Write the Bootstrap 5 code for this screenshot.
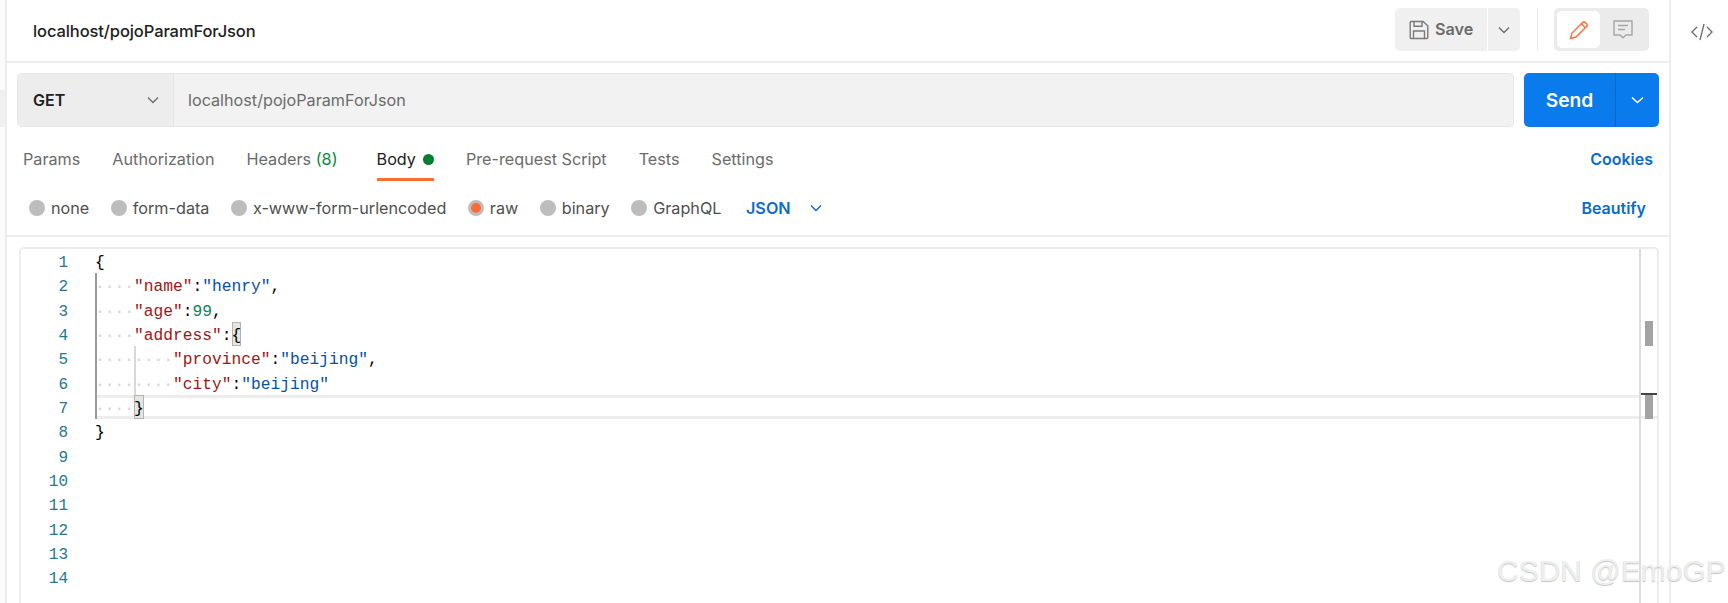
<!DOCTYPE html>
<html lang="en">
<head>
<meta charset="utf-8">
<title>localhost/pojoParamForJson</title>
<link href="https://cdn.jsdelivr.net/npm/bootstrap@5.3.0/dist/css/bootstrap.min.css" rel="stylesheet">
<style>
html,body{height:603px;overflow:hidden}
body{font-family:Inter,"Liberation Sans",sans-serif;background:#fff;color:#212121;font-size:16.2px}
.shell{height:603px;position:relative}
.left-strip{width:7px;flex:none;background:#fbfbfb;border-right:2px solid #ededed;padding-top:90px}
.left-strip i{display:block;height:37px;background:#f0f0f0;width:5px}
.main-pane{width:1662px;flex:none;min-width:0}
.main-pane>div{flex:none}
.side-pane{flex:1;border-left:2px solid #ededed;padding-top:18px;padding-left:20px}
.head-row{height:63px;border-bottom:2px solid #ededed;padding:8px 20px 0 26px}
.req-title{font-size:16.5px;font-weight:500;color:#212121;margin-top:11px;letter-spacing:-.1px}
.save-btn{height:43px;width:92px;background:#f0f0f0;border-radius:5px 0 0 5px;color:#6b6b6b;font-weight:600;font-size:16.2px;gap:6px;padding-left:14px}
.save-caret{height:43px;width:32px;margin-left:1px;background:#f0f0f0;border-radius:0 5px 5px 0}
.vsep{width:1px;height:43px;background:#ededed;margin:0 16px 0 17px}
.mode-box{height:43px;width:95px;background:#ebebeb;border-radius:5px;padding:3px}
.mode-on{width:43px;height:37px;background:#fff;border-radius:5px}
.mode-off{width:46px;height:37px}
.url-row{padding:10px 10px 0 10px;height:65px}
.url-box{flex:1;height:54px;background:#f2f2f2;border:1px solid #e6e6e6;border-radius:5px;overflow:hidden}
.method{width:156px;background:#ededed;border-right:1px solid #e6e6e6;padding:0 14px 0 15px;font-weight:600;font-size:16px;color:#212121}
.url-text{padding-left:14px;font-size:16.2px;color:#6b6b6b}
.send-btn{width:135px;height:54px;margin-left:10px;background:#097bed;border-radius:5px;color:#fff;font-weight:600;font-size:19.2px}
.send-main{width:92px;border-right:1px solid #0767c6;height:100%}
.send-caret{flex:1;height:100%}
.tab-row{height:53px;padding:0 16px 0 16px}
.tab-item{color:#6b6b6b;height:53px;padding-top:9px;margin-right:32px;position:relative}
.tab-item.wide-gap{margin-right:39px}
.tab-item.on{color:#212121}
.tab-item.on::after{content:"";position:absolute;left:0;right:0;bottom:0;height:3px;background:#ff6c37}
.green-num{color:#0a8a3e}
.green-dot{width:11px;height:11px;border-radius:50%;background:#007f31;margin-left:7px}
.link-blue{color:#0b6bcb;font-weight:600;font-size:16px}
.cookie-link{margin-top:9px}
.radio-row{height:56px;padding:0 23px 0 22px;border-bottom:2px solid #ededed}
.rad{width:16px;height:16px;border-radius:50%;background:#bdbdbd;margin-right:6px;flex:none}
.rad.sel{background:#ff6c37;border:3px solid #bdbdbd}
.rad-item{color:#505050;margin-right:21.5px}
.json-pick{color:#0b6bcb;font-weight:600;margin-left:3px;gap:19px}
.editor-wrap{padding:10px 10px 0 12px}
.editor{height:356px;border:2px solid #ededed;border-bottom:0;border-radius:5px 5px 0 0;position:relative;overflow:hidden}
.gutter{width:74px;flex:none;text-align:right;padding-right:27px;padding-top:2px;color:#237893;font-family:"Liberation Mono",monospace;font-size:16px;line-height:24.33px}
.code{flex:1;min-width:0;font-family:"Liberation Mono",monospace;font-size:16.25px;color:#000}
.code-line{height:24.33px;line-height:27.5px;white-space:pre;position:relative}
.code-line.cur{box-shadow:inset 0 3px 0 #ededed,inset 0 -3px 0 #ededed}
.ws{color:#d4d4d4}
.k{color:#a31515}
.s{color:#0451a5}
.n{color:#098658}
.brk{display:inline-block;height:24px;line-height:27.5px;vertical-align:top;background:#e2e8e0;box-shadow:inset 0 0 0 1px #b4b4b4}
.ruler{width:18px;flex:none;border-left:2px solid #dcdcdc;position:relative}
.guide{position:absolute;width:2px}
.guide-a{left:0;top:24px;height:146px;background:#9a9a9a}
.guide-b{left:39px;top:97px;height:49px;background:#d8d8d8}
.guide-host{position:absolute;left:74px;top:0;width:60px;height:300px}
.thumb{position:absolute;left:4px;width:8px;background:#a3a3a3}
.t1{top:72px;height:25px}
.t2{top:146px;height:24px}
.ov{position:absolute;left:0;right:0;height:2px;top:144px;background:#444}
.ruler-band{position:absolute;left:0;right:0;top:146px;height:24px;box-shadow:inset 0 -3px 0 #ededed}
.mark-text{position:absolute;left:1497px;top:553px;font-family:"Liberation Sans",sans-serif;font-size:30px;color:#eeeeee;text-shadow:0 1px 1px #c4c4c4;white-space:nowrap;line-height:1.2}
</style>
</head>
<body>
<div class="shell d-flex">
  <div class="left-strip"><i></i></div>
  <div class="main-pane d-flex flex-column">
    <div class="head-row d-flex justify-content-between align-items-start">
      <div class="req-title">localhost/pojoParamForJson</div>
      <div class="d-flex align-items-center">
        <div class="save-btn d-flex align-items-center">
          <svg width="20" height="20" viewBox="0 0 20 20" fill="none" stroke="#7a7a7a" stroke-width="1.4"><path d="M1.2 2.5a1 1 0 0 1 1-1H14l4.8 4.3v11.7a1 1 0 0 1-1 1H2.200a1 1 0 0 1-1-1z"/><path d="M5 1.700v4.600h8V1.700M4.500 18.500v-7.500h11v7.500"/></svg>
          <span>Save</span>
        </div>
        <div class="save-caret d-flex align-items-center justify-content-center">
          <svg width="12" height="8" viewBox="0 0 12 8" fill="none" stroke="#6b6b6b" stroke-width="1.3"><path d="M1 1.500l5 5 5-5"/></svg>
        </div>
        <div class="vsep"></div>
        <div class="mode-box d-flex align-items-center">
          <div class="mode-on d-flex align-items-center justify-content-center">
            <svg width="20" height="20" viewBox="0 0 20 20" fill="none" stroke="#ff6c37" stroke-width="1.400"><path d="M1.500 18.500l1.500-5.500L13.800 2.200a1.600 1.600 0 0 1 2.300 0l1.700 1.700a1.600 1.600 0 0 1 0 2.300L7 17z"/><path d="M12.300 3.700l4 4"/></svg>
          </div>
          <div class="mode-off d-flex align-items-center justify-content-center">
            <svg width="20" height="19" viewBox="0 0 20 19" fill="none" stroke="#a6a6a6" stroke-width="1.400"><path d="M1 1h18v14h-6l-3 2.800-3-2.800H1z"/><path d="M5 5.500h10M5 9.500h7"/></svg>
          </div>
        </div>
      </div>
    </div>

    <div class="url-row d-flex">
      <div class="url-box d-flex">
        <div class="method d-flex align-items-center justify-content-between">
          <span>GET</span>
          <svg width="12" height="8" viewBox="0 0 12 8" fill="none" stroke="#6b6b6b" stroke-width="1.300"><path d="M1 1.500l5 5 5-5"/></svg>
        </div>
        <div class="url-text d-flex align-items-center">localhost/pojoParamForJson</div>
      </div>
      <div class="send-btn d-flex align-items-center">
        <div class="send-main d-flex align-items-center justify-content-center">Send</div>
        <div class="send-caret d-flex align-items-center justify-content-center">
          <svg width="13" height="8" viewBox="0 0 13 8" fill="none" stroke="#fff" stroke-width="1.500"><path d="M1 1.500l5.500 5 5.500-5"/></svg>
        </div>
      </div>
    </div>

    <div class="tab-row d-flex align-items-center justify-content-between">
      <div class="d-flex align-items-center">
        <div class="tab-item d-flex align-items-center">Params</div>
        <div class="tab-item d-flex align-items-center">Authorization</div>
        <div class="tab-item wide-gap d-flex align-items-center">Headers&nbsp;<span class="green-num">(8)</span></div>
        <div class="tab-item on d-flex align-items-center">Body<span class="green-dot"></span></div>
        <div class="tab-item d-flex align-items-center">Pre-request Script</div>
        <div class="tab-item d-flex align-items-center">Tests</div>
        <div class="tab-item d-flex align-items-center">Settings</div>
      </div>
      <span class="link-blue cookie-link">Cookies</span>
    </div>

    <div class="radio-row d-flex align-items-center justify-content-between">
      <div class="d-flex align-items-center">
        <div class="rad-item d-flex align-items-center"><span class="rad"></span>none</div>
        <div class="rad-item d-flex align-items-center"><span class="rad"></span>form-data</div>
        <div class="rad-item d-flex align-items-center"><span class="rad"></span>x-www-form-urlencoded</div>
        <div class="rad-item d-flex align-items-center"><span class="rad sel"></span>raw</div>
        <div class="rad-item d-flex align-items-center"><span class="rad"></span>binary</div>
        <div class="rad-item d-flex align-items-center"><span class="rad"></span>GraphQL</div>
        <div class="json-pick d-flex align-items-center">JSON
          <svg width="12" height="8" viewBox="0 0 12 8" fill="none" stroke="#0b6bcb" stroke-width="1.400"><path d="M1 1.500l5 5 5-5"/></svg>
        </div>
      </div>
      <span class="link-blue">Beautify</span>
    </div>

    <div class="editor-wrap">
      <div class="editor d-flex">
        <div class="gutter">1<br>2<br>3<br>4<br>5<br>6<br>7<br>8<br>9<br>10<br>11<br>12<br>13<br>14</div>
        <div class="code">
          <div class="code-line">{</div>
          <div class="code-line"><span class="ws">····</span><span class="k">"name"</span>:<span class="s">"henry"</span>,</div>
          <div class="code-line"><span class="ws">····</span><span class="k">"age"</span>:<span class="n">99</span>,</div>
          <div class="code-line"><span class="ws">····</span><span class="k">"address"</span>:<span class="brk">{</span></div>
          <div class="code-line"><span class="ws">········</span><span class="k">"province"</span>:<span class="s">"beijing"</span>,</div>
          <div class="code-line"><span class="ws">········</span><span class="k">"city"</span>:<span class="s">"beijing"</span></div>
          <div class="code-line cur"><span class="ws">····</span><span class="brk">}</span></div>
          <div class="code-line">}</div>
        </div>
        <div class="guide-host"><span class="guide guide-a"></span><span class="guide guide-b"></span></div>
        <div class="ruler">
          <div class="ruler-band"></div>
          <div class="ov"></div>
          <div class="thumb t1"></div>
          <div class="thumb t2"></div>
        </div>
      </div>
    </div>
  </div>
  <div class="side-pane">
    <svg width="22" height="18" viewBox="0 0 22 18" fill="none" stroke="#6b6b6b" stroke-width="1.300"><path d="M6 4l-5 5 5 5M16 4l5 5-5 5M13 1L9 17"/></svg>
  </div>
  <div class="mark-text">CSDN @EmoGP</div>
</div>
<script src="https://cdn.jsdelivr.net/npm/bootstrap@5.3.0/dist/js/bootstrap.bundle.min.js"></script>
</body>
</html>
